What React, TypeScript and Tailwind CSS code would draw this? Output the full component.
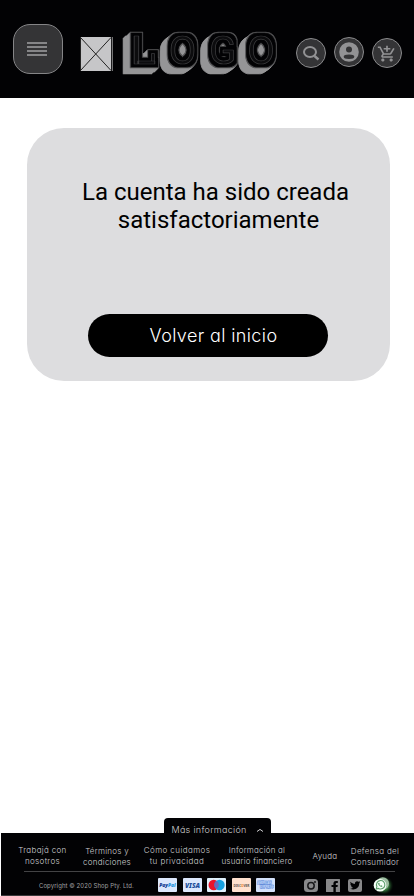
import React from 'react';
import { MdAddShoppingCart } from 'react-icons/md';

const geo = "font-[Inter,'Open_Sans',sans-serif] [font-feature-settings:'cv11','ss03']";

const letters = [
  { ch: 'L', x: 134, w: 21 },
  { ch: 'O', x: 171, w: 23 },
  { ch: 'G', x: 211.5, w: 22 },
  { ch: 'O', x: 249.5, w: 23 },
];

// Horizontal ink box of each glyph in ems: left bearing and ink width.
const ink: Record<string, [number, number]> = {
  L: [0.081, 0.44],
  O: [0.055, 0.575],
  G: [0.057, 0.555],
};

const depth = [1, 2, 3, 4, 5, 6, 7];

function Logo() {
  const size = 38;
  return (
    <svg className="h-[50px] w-[160px] shrink-0" viewBox="120 28 160 50" aria-label="LOGO">
      <defs>
        <filter id="block" filterUnits="userSpaceOnUse" x="120" y="28" width="160" height="50" colorInterpolationFilters="sRGB">
          <feMorphology in="SourceAlpha" operator="dilate" radius="4" result="outer" />
          <feMorphology in="SourceAlpha" operator="dilate" radius="3" result="inner" />
          {depth.map((d) => (
            <feOffset key={d} in="outer" dx={-d} dy={d - (d > 4 ? 1 : 0)} result={`d${d}`} />
          ))}
          <feMerge result="sides">
            {depth.map((d) => <feMergeNode key={d} in={`d${d}`} />)}
          </feMerge>
          <feFlood floodColor="#959597" result="gray" />
          <feComposite in="gray" in2="sides" operator="in" result="body" />
          <feFlood floodColor="#515153" result="edge" />
          <feComposite in="edge" in2="outer" operator="in" result="rim" />
          <feFlood floodColor="#020204" result="dark" />
          <feComposite in="dark" in2="inner" operator="in" result="face" />
          <feMerge>
            <feMergeNode in="body" />
            <feMergeNode in="rim" />
            <feMergeNode in="face" />
            <feMergeNode in="SourceGraphic" />
          </feMerge>
        </filter>
      </defs>
      <g filter="url(#block)" fill="#0c0c0e" stroke="#3e3e40" strokeWidth="0.7" strokeLinejoin="round">
        <rect x="151.5" y="53.5" width="3" height="10" />
        {letters.map((l, i) => {
          const [left, inkWidth] = ink[l.ch];
          const sx = l.w / (inkWidth * size);
          return (
            <text
              key={i}
              transform={`translate(${l.x - left * size * sx} 63.5) scale(${sx} 1)`}
              fontFamily="Roboto, sans-serif"
              fontSize={size}
            >
              {l.ch}
            </text>
          );
        })}
      </g>
    </svg>
  );
}

function Round({ children, className = '' }: { children: React.ReactNode; className?: string }) {
  return (
    <button className={`flex size-[30px] shrink-0 items-center justify-center rounded-full border border-[#8b8b8d] bg-[#343436] text-[#929294] ${className}`}>
      {children}
    </button>
  );
}

function Header() {
  return (
    <header className="flex h-[98px] items-start bg-[#020204]">
      <button className="ml-[13px] mt-6 flex size-[50px] shrink-0 flex-col items-center justify-center gap-[2px] rounded-[17px] border border-[#858587] bg-[#343436] pr-[2px]">
        {[0, 1, 2, 3].map((i) => (
          <span key={i} className="h-[2px] w-5 bg-[#858587]" />
        ))}
      </button>
      <svg className="ml-[17px] mt-[37px] h-[34px] w-[34px] shrink-0" viewBox="0 0 34 34">
        <path fill="#c6c6c8" d="M0 0h31v34H0z" />
        <path fill="#929294" d="M31.8 0h1v34h-1z" />
        <path stroke="#222" strokeWidth="1" d="M.5 0v34M.5.5l30.5 33M31 .5l-30.5 33" />
      </svg>
      <div className="ml-[6px] mt-7 shrink-0"><Logo /></div>
      <Round className="ml-4 mt-[38px]">
        <svg className="h-4 w-[18px]" viewBox="0 0 18 16" fill="none" stroke="currentColor" strokeWidth="2">
          <ellipse cx="8" cy="7" rx="6" ry="5" />
          <path d="m12.5 11 4 3.5" strokeWidth="2.4" />
        </svg>
      </Round>
      <Round className="ml-2 mt-[37px]">
        <svg className="size-5" viewBox="0 0 20 20">
          <circle cx="10" cy="10" r="9.8" fill="currentColor" />
          <circle cx="10" cy="7.5" r="3" fill="#343436" />
          <ellipse cx="10" cy="14.7" rx="5.3" ry="2.2" fill="#343436" />
        </svg>
      </Round>
      <Round className="ml-2 mt-[38px] pt-[2px]">
        <MdAddShoppingCart className="h-[18px] w-[20px]" preserveAspectRatio="none" />
      </Round>
    </header>
  );
}

const links = [
  { lines: ['Trabajá con', 'nosotros'], box: 'w-[51px] ml-[16px] mt-[12px] tracking-[0.33px]' },
  { lines: ['Términos y', 'condiciones'], box: 'w-[52px] ml-[13px] mt-[13px] tracking-[0.25px]' },
  { lines: ['Cómo cuidamos', 'tu privacidad'], box: 'w-[70px] ml-[9px] mt-[12px] tracking-[0.42px]' },
  { lines: ['Información al', 'usuario financiero'], box: 'w-[76px] ml-[7px] mt-[12px] tracking-[0.2px]' },
  { lines: ['Ayuda'], box: 'w-[30px] ml-[15px] mt-[18px] tracking-[0.25px]' },
  { lines: ['Defensa del', 'Consumidor'], box: 'w-[54px] ml-[8px] mt-[13px] tracking-[0.32px]' },
];

function Payments() {
  const card = 'h-[14px] w-[19px] shrink-0';
  return (
    <div className="flex gap-[5.5px]">
      <svg className={card} viewBox="0 0 19 14">
        <rect width="19" height="14" rx="1" fill="#dce8fd" />
        <text x="1.2" y="9" fontFamily="'Open Sans', sans-serif" fontWeight="800" fontStyle="italic" fontSize="5.6" textLength="16.5" lengthAdjust="spacingAndGlyphs" fill="#123b92">
          Pay<tspan fill="#2393dc">Pal</tspan>
        </text>
      </svg>
      <svg className={card} viewBox="0 0 19 14">
        <rect width="19" height="14" rx="1" fill="#dce8fd" />
        <text x="2" y="9.8" fontFamily="'Open Sans', sans-serif" fontWeight="800" fontStyle="italic" fontSize="7.5" textLength="15" lengthAdjust="spacingAndGlyphs" fill="#204e9b">VISA</text>
      </svg>
      <svg className={card} viewBox="0 0 19 14">
        <rect width="19" height="14" rx="1" fill="#dff1fd" />
        <circle cx="6.7" cy="7" r="5.2" fill="#e9132b" />
        <circle cx="12.5" cy="7" r="5.2" fill="#16a0e0" />
        <path d="M9.6 2.7a5.2 5.2 0 0 1 0 8.6 5.2 5.2 0 0 1 0-8.6" fill="#6868bd" />
      </svg>
      <svg className={card} viewBox="0 0 19 14">
        <rect width="19" height="14" rx="1" fill="#ffe1cf" />
        <text x="1.5" y="8.6" fontFamily="'Open Sans', sans-serif" fontWeight="700" fontSize="4.2" textLength="16" lengthAdjust="spacingAndGlyphs" fill="#5d514e">
          DISC<tspan fill="#f07b22">O</tspan>VER
        </text>
      </svg>
      <svg className={card} viewBox="0 0 19 14">
        <rect width="19" height="14" rx="1" fill="#d3e1fb" />
        <g fontFamily="'Liberation Sans', sans-serif" fontWeight="700" fontSize="3.6" fill="#d9e6ff" stroke="#4777d4" strokeWidth=".8" paintOrder="stroke">
          <text x="1" y="5.8" textLength="14.5" lengthAdjust="spacingAndGlyphs">AMERICAN</text>
          <text x="4" y="9.8" textLength="13.5" lengthAdjust="spacingAndGlyphs">EXPRESS</text>
        </g>
      </svg>
    </div>
  );
}

function Social() {
  const icon = 'h-[13px] w-[14px] shrink-0';
  return (
    <div className="flex items-center gap-2">
      <svg className={icon} viewBox="0 0 14 13">
        <rect width="14" height="13" rx="3.5" fill="#88888a" />
        <circle cx="7" cy="6.7" r="3.2" fill="none" stroke="#171719" strokeWidth="1.5" />
        <circle cx="11" cy="3" r="1" fill="#171719" />
      </svg>
      <svg className={icon} viewBox="0 0 14 13">
        <rect width="14" height="13" rx=".5" fill="#88888a" />
        <path d="M7.4 13V8H5.5V6h1.9V4.6C7.4 2.7 8.5 2 10 2h1.8v2h-1c-.8 0-1 .3-1 1v1h2l-.3 2H9.8v5z" fill="#020204" />
      </svg>
      <svg className={icon} viewBox="0 0 14 13">
        <rect width="14" height="13" rx="2" fill="#88888a" />
        <path d="M2.5 2.8c1.2 1.4 2.7 2.1 4.4 2.2-.4-2.5 2.3-3.6 3.7-2.2l1.5-.5-.7 1.2.9-.2-1.1 1.2c.1 4.7-5.1 7.4-9 5.1 1.2 0 2.1-.3 2.9-.9-1-.1-1.7-.7-2-1.5h.8c-1-.4-1.5-1.2-1.5-2.1l.8.2c-.9-.7-1.1-1.6-.7-2.5" fill="#020204" />
      </svg>
      <svg className="ml-px h-5 w-6 shrink-0" viewBox="0 0 24 20">
        <defs>
          <radialGradient id="halo">
            <stop offset=".5" stopColor="#35773b" />
            <stop offset="1" stopColor="#07190b" stopOpacity="0" />
          </radialGradient>
        </defs>
        <circle cx="13" cy="10.5" r="9.5" fill="url(#halo)" />
        <circle cx="11.8" cy="8.5" r="6.2" fill="#9ebea2" />
        <circle cx="9" cy="10.2" r="6.3" fill="#f5fff7" />
        <path d="m5.2 14 .7-2.4a4.2 4.2 0 1 1 1.7 1.8z" fill="none" stroke="#5a9c69" strokeWidth="1.1" />
        <path d="M7 8.3c.3 2 1.8 3.4 3.8 3.7l.7-.9-1.3-.8-.7.5-1.1-1.1.5-.7-.8-1.3z" fill="#5a9c69" />
      </svg>
    </div>
  );
}

function Footer() {
  return (
    <footer className={`${geo} text-[#d0d0d2]`}>
      <button className="ml-[164px] flex h-[15px] w-[107px] items-start rounded-t-[4px] bg-[#020204] pl-[7.5px] pt-1 text-[9px] font-light leading-[11px]">
        <span className="h-[11px] w-[76px] whitespace-nowrap pt-[2px] text-left leading-[11px] tracking-[0.3px]">Más información</span>
        <svg className="ml-2 mt-[6px] h-[5px] w-2 shrink-0" viewBox="0 0 8 5" fill="none" stroke="currentColor">
          <path d="M1 3.5 4 1.4l3 2.1" />
        </svg>
      </button>
      <div className="ml-px h-[62px] bg-[#020204]">
        <nav className="flex h-[38px] items-start text-[8px] font-light leading-[11px]">
          {links.map((l) => (
            <a key={l.lines[0]} className={`flex shrink-0 flex-col items-center whitespace-nowrap ${l.box}`}>
              {l.lines.map((t) => <span key={t}>{t}</span>)}
            </a>
          ))}
        </nav>
        <div className="ml-[23px] h-px w-[371px] bg-[#434345]" />
        <div className="flex h-[23px] items-center pt-[3px]">
          <span className="ml-[38px] w-[119px] whitespace-nowrap text-[6px] tracking-[0.07px] text-[#a0a0a2]">Copyright © 2020 Shop Pty. Ltd.</span>
          <Payments />
          <div className="ml-[29px]"><Social /></div>
        </div>
      </div>
      <div className="ml-px h-px bg-[#39393b]" />
    </footer>
  );
}

export default function App() {
  return (
    <div className="flex h-[896px] w-[414px] flex-col overflow-hidden bg-white">
      <Header />
      <main className="flex-1">
        <section className="ml-[27px] mt-[30px] flex h-[253px] w-[363px] flex-col items-center rounded-[37px] bg-[#dddddf] pt-[50px]">
          <h1 className="ml-[14px] flex flex-col items-center whitespace-nowrap font-[Roboto,sans-serif] text-[24px] leading-[28px] text-black">
            <span>La cuenta ha sido creada</span>
            <span className="ml-[6px]">satisfactoriamente</span>
          </h1>
          <button className={`${geo} mr-[2px] mt-20 flex h-[43px] w-[240px] items-center justify-center rounded-full bg-black pl-[12px] text-[18px] font-light tracking-[0.38px] text-white`}>
            Volver al inicio
          </button>
        </section>
      </main>
      <Footer />
    </div>
  );
}
